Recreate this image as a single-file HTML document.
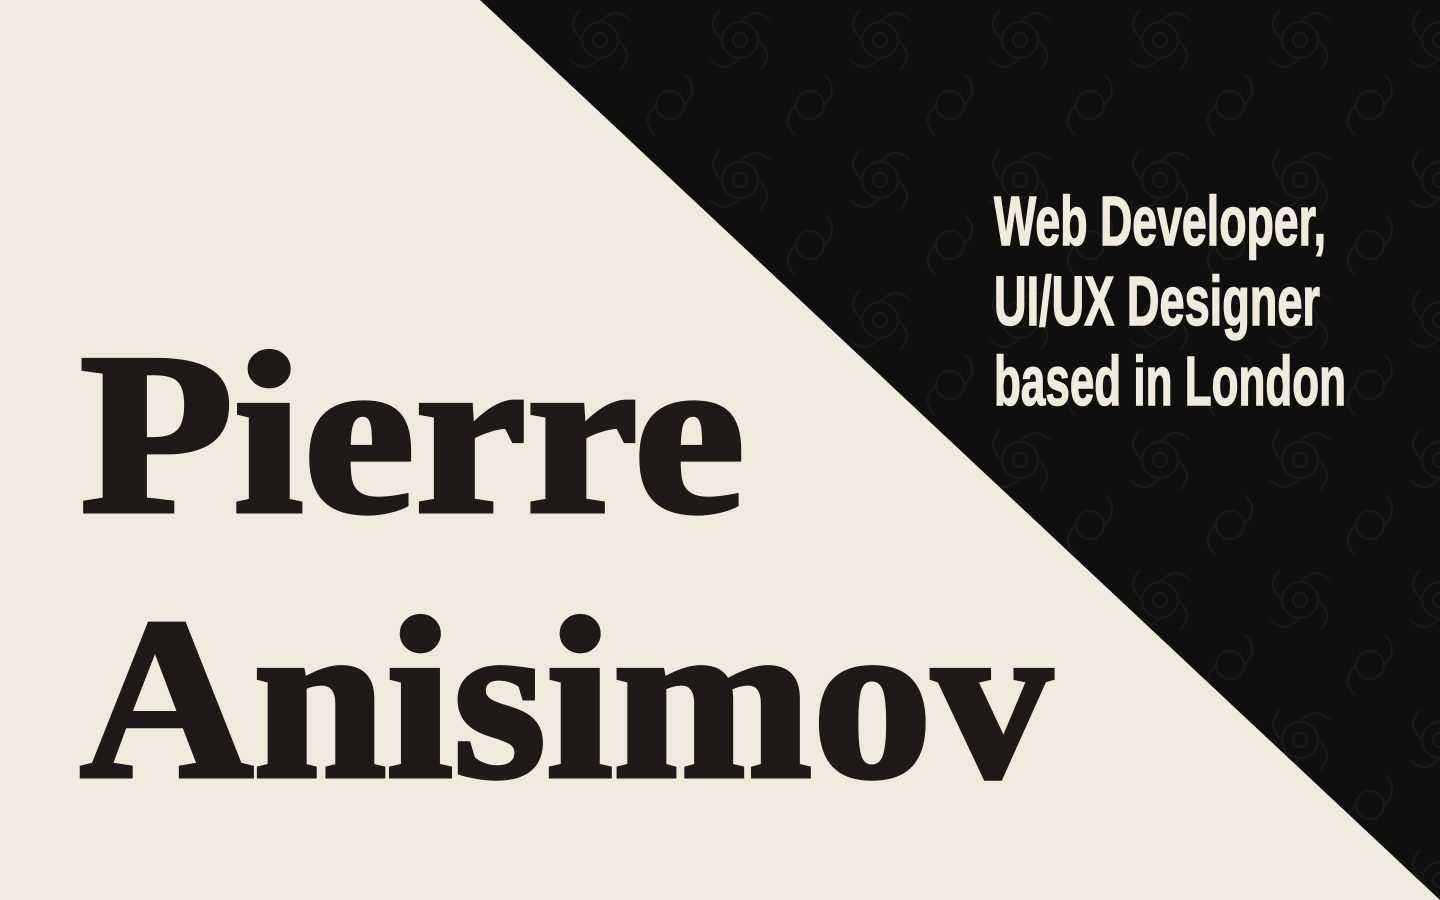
<!DOCTYPE html>
<html><head><meta charset="utf-8"><style>
html,body{margin:0;padding:0;width:1440px;height:900px;overflow:hidden;background:#eeebde}
svg{display:block}
</style></head><body>
<svg width="1440" height="900" viewBox="0 0 1440 900" xmlns="http://www.w3.org/2000/svg">
<defs>
<pattern id="fl" width="140" height="140" patternUnits="userSpaceOnUse">
<rect width="140" height="140" fill="#0f0f0f"/>
<g fill="none" stroke="#191919" stroke-width="2">
<circle cx="40" cy="40" r="18"/><circle cx="40" cy="40" r="7"/>
<path d="M40 22 Q55 5 70 20 M58 40 Q75 55 60 70 M40 58 Q25 75 10 60 M22 40 Q5 25 20 10"/>
<circle cx="110" cy="105" r="14"/><path d="M96 105 Q80 120 95 135 M124 105 Q140 90 125 75"/>
</g>
</pattern>
</defs>
<polygon points="480,0 1440,0 1440,900" fill="url(#fl)"/>
<g font-family="'Liberation Serif',serif" font-weight="bold" fill="#1e1a19" stroke="#1e1a19" stroke-width="5" font-size="230">
<text x="80" y="511" textLength="665" lengthAdjust="spacingAndGlyphs">Pierre</text>
<text x="80" y="776" textLength="972" lengthAdjust="spacingAndGlyphs">Anisimov</text>
</g>
<g font-family="'Liberation Sans Narrow','Liberation Sans',sans-serif" font-weight="bold" fill="#efebdf" stroke="#efebdf" stroke-width="1.5" font-size="70">
<text x="994" y="245" textLength="332" lengthAdjust="spacingAndGlyphs">Web Developer,</text>
<text x="994" y="325" textLength="326" lengthAdjust="spacingAndGlyphs">UI/UX  Designer</text>
<text x="994" y="405" textLength="352" lengthAdjust="spacingAndGlyphs">based in London</text>
</g>
</svg>
</body></html>
